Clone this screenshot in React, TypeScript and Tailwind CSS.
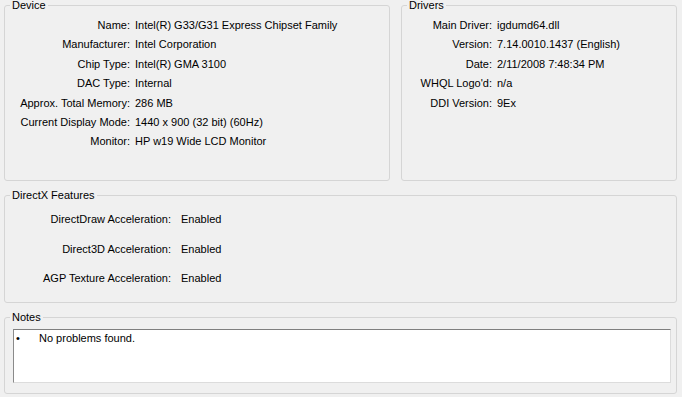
import React from "react";

const deviceRows: [string, string][] = [
  ["Name:", "Intel(R) G33/G31 Express Chipset Family"],
  ["Manufacturer:", "Intel Corporation"],
  ["Chip Type:", "Intel(R) GMA 3100"],
  ["DAC Type:", "Internal"],
  ["Approx. Total Memory:", "286 MB"],
  ["Current Display Mode:", "1440 x 900 (32 bit) (60Hz)"],
  ["Monitor:", "HP w19 Wide LCD Monitor"],
];

const driverRows: [string, string][] = [
  ["Main Driver:", "igdumd64.dll"],
  ["Version:", "7.14.0010.1437 (English)"],
  ["Date:", "2/11/2008 7:48:34 PM"],
  ["WHQL Logo'd:", "n/a"],
  ["DDI Version:", "9Ex"],
];

const dxRows: [string, string][] = [
  ["DirectDraw Acceleration:", "Enabled"],
  ["Direct3D Acceleration:", "Enabled"],
  ["AGP Texture Acceleration:", "Enabled"],
];

function Legend({ children }: { children: React.ReactNode }) {
  return <legend className="ml-[5px] px-[2px] leading-[11px]">{children}</legend>;
}

export default function App() {
  return (
    <div className="w-[682px] h-[397px] overflow-hidden bg-[#f0f0f0] text-black text-[11px] font-['Liberation_Sans',Arial,sans-serif] pl-[4px] pr-[5px] flex flex-col">
      <div className="flex gap-[11px] h-[181px] shrink-0">
        <fieldset className="w-[386px] h-full border border-[#d5d5d5] rounded-[3px]">
          <Legend>Device</Legend>
          <div className="grid grid-cols-[125px_1fr] gap-x-[5px] pt-[5px] leading-[19.4px]">
            {deviceRows.map(([k, v]) => (
              <React.Fragment key={k}>
                <div className="text-right whitespace-nowrap">{k}</div>
                <div className="whitespace-nowrap">{v}</div>
              </React.Fragment>
            ))}
          </div>
        </fieldset>
        <fieldset className="w-[276px] h-full border border-[#d5d5d5] rounded-[3px]">
          <Legend>Drivers</Legend>
          <div className="grid grid-cols-[90px_1fr] gap-x-[5px] pt-[5px] leading-[19.4px]">
            {driverRows.map(([k, v]) => (
              <React.Fragment key={k}>
                <div className="text-right whitespace-nowrap">{k}</div>
                <div className="whitespace-nowrap">{v}</div>
              </React.Fragment>
            ))}
          </div>
        </fieldset>
      </div>

      <fieldset className="mt-[9px] h-[113px] shrink-0 border border-[#d5d5d5] rounded-[3px]">
        <Legend>DirectX Features</Legend>
        <div className="grid grid-cols-[166px_1fr] gap-x-[10px] pt-[4px] leading-[29.6px]">
          {dxRows.map(([k, v]) => (
            <React.Fragment key={k}>
              <div className="text-right whitespace-nowrap">{k}</div>
              <div className="whitespace-nowrap">{v}</div>
            </React.Fragment>
          ))}
        </div>
      </fieldset>

      <fieldset className="mt-[9px] h-[82px] shrink-0 border border-[#d5d5d5] rounded-[3px]">
        <Legend>Notes</Legend>
        <div className="mt-[6px] ml-[8px] mr-[5px] h-[54px] bg-white border border-t-[#7f7f7f] border-l-[#8a8a8a] border-r-[#dcdcdc] border-b-[#dcdcdc] pt-[2px] pl-[2px] leading-[12px]">
          <div className="flex">
            <span className="w-[23px] shrink-0">•</span>
            <span>No problems found.</span>
          </div>
        </div>
      </fieldset>
    </div>
  );
}
